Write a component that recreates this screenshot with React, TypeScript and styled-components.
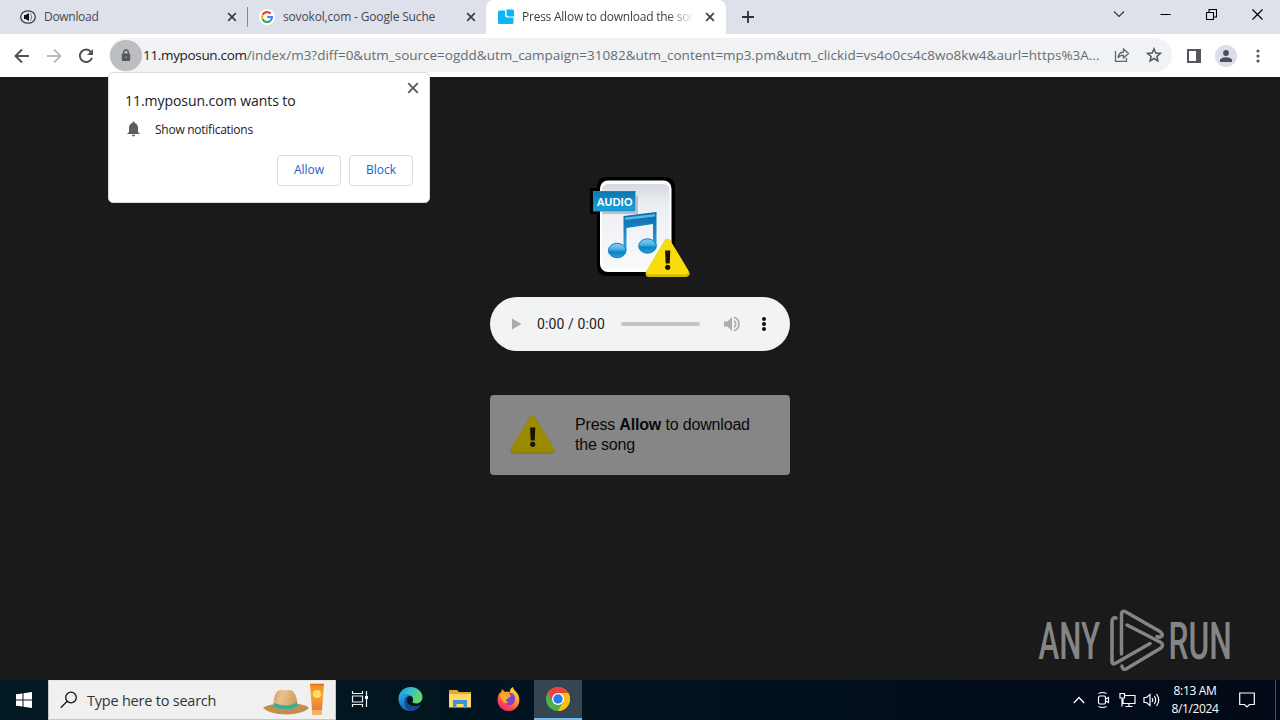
import React from 'react';
import styled, { createGlobalStyle } from 'styled-components';

const GlobalStyle = createGlobalStyle`
  * { box-sizing: border-box; }
  body { margin: 0; background: #1a1a1a; font-family: "Open Sans", "Noto Sans", sans-serif; overflow: hidden; }
  svg { display: block; flex: none; }
`;

const Screen = styled.div`
  width: 1280px;
  height: 720px;
  display: flex;
  flex-direction: column;
  position: relative;
`;

const Label = styled.span<{ $size: number; $spacing?: number; $color?: string; $weight?: number }>`
  font-size: ${p => p.$size}px;
  letter-spacing: ${p => p.$spacing ?? 0}px;
  color: ${p => p.$color ?? '#202124'};
  font-weight: ${p => p.$weight ?? 400};
  white-space: nowrap;
`;

/* Tab strip */
const TabStrip = styled.header`
  height: 34px;
  flex: none;
  background: #dee1e9;
  display: flex;
  padding-left: 8px;
`;
const Tab = styled.div<{ $active?: boolean; $divider?: boolean }>`
  width: ${p => (p.$active ? 240 : 239)}px;
  height: 34px;
  display: flex;
  align-items: center;
  gap: 8px;
  padding: 0 6px 0 12px;
  position: relative;
  background: ${p => (p.$active ? '#fff' : 'transparent')};
  border-radius: 8px 8px 0 0;
  &::after {
    content: '';
    display: ${p => (p.$divider ? 'block' : 'none')};
    position: absolute;
    right: -1px;
    top: 7px;
    width: 1px;
    height: 20px;
    background: #84878c;
  }
`;
const TabTitle = styled.div<{ $fade?: boolean }>`
  width: 172px;
  flex: none;
  overflow: hidden;
  display: flex;
  line-height: 18px;
  mask-image: ${p => (p.$fade ? 'linear-gradient(to right, #000 145px, transparent 172px)' : 'none')};
`;
const TabClose = styled.div`
  width: 16px;
  flex: none;
`;
const NewTab = styled.div`
  width: 28px;
  margin-left: 8px;
  display: grid;
  place-items: center;
`;
const WindowButtons = styled.div`
  margin-left: auto;
  width: 184px;
  height: 28px;
  display: grid;
  grid-template-columns: repeat(4, 46px);
  place-items: center;
`;

/* Toolbar */
const Toolbar = styled.div`
  height: 43px;
  flex: none;
  background: #fff;
  display: flex;
  align-items: center;
  padding: 0 6px;
`;
const ToolButton = styled.div`
  width: 32px;
  height: 32px;
  display: grid;
  place-items: center;
  flex: none;
`;
const AddressBar = styled.div`
  width: 1063px;
  height: 34px;
  margin: 0 6px 1px 7px;
  border-radius: 17px;
  background: #f0f2f4;
  display: flex;
  align-items: center;
  flex: none;
`;
const SiteInfo = styled.div`
  width: 32px;
  height: 31px;
  margin: 0 1px 0 1px;
  border-radius: 50%;
  background: #bbbdbe;
  display: grid;
  place-items: center;
  flex: none;
`;
const Address = styled.div`
  width: 963px;
  flex: none;
  display: flex;
  white-space: nowrap;
  line-height: 20px;
`;
const Avatar = styled.div`
  width: 22px;
  height: 22px;
  border-radius: 50%;
  background: #dcdfe7;
  display: grid;
  place-items: center;
`;

/* Page */
const Page = styled.main`
  height: 603px;
  flex: none;
  background: #1a1a1a;
  display: flex;
  flex-direction: column;
  align-items: center;
  padding-top: 99px;
`;
const Player = styled.div`
  width: 300px;
  height: 54px;
  margin-top: 19px;
  flex: none;
  border-radius: 27px;
  background: #f1f3f5;
  display: flex;
  align-items: center;
  padding-left: 17px;
`;
const PlayerTime = styled.div`
  width: 84px;
  margin-left: 10px;
  font: 14px/18px "Roboto", sans-serif;
  letter-spacing: 0.12px;
  color: #1c1c1e;
  white-space: nowrap;
`;
const Track = styled.div`
  width: 79px;
  height: 4px;
  border-radius: 2px;
  background: #c3c4c5;
  margin-right: 22px;
`;
const PlayerMenu = styled.div`
  margin-left: 12px;
`;
const Notice = styled.section`
  width: 300px;
  height: 80px;
  margin-top: 44px;
  flex: none;
  border-radius: 4px;
  background: #868686;
  display: flex;
  align-items: center;
  padding-left: 20px;
  gap: 20px;
`;
const NoticeText = styled.p`
  margin: 0;
  width: 190px;
  font: 16px/20px "Liberation Sans", Arial, sans-serif;
  letter-spacing: -0.17px;
  color: #0a0a0a;
`;
const Watermark = styled.div`
  position: absolute;
  left: 1034px;
  top: 606px;
`;

/* Permission bubble */
const Bubble = styled.aside`
  position: absolute;
  left: 108px;
  top: 72px;
  width: 322px;
  height: 131px;
  border-radius: 5px;
  background: #fff;
  border: 1px solid #d9dbdd;
  padding: 7px 16px 0;
  display: flex;
  flex-direction: column;
`;
const BubbleClose = styled.div`
  align-self: flex-end;
  height: 11px;
  margin-right: -8px;
`;
const BubbleTitle = styled.div`
  line-height: 20px;
  height: 20px;
  display: flex;
`;
const PermissionRow = styled.div`
  display: flex;
  align-items: center;
  height: 18px;
  margin-top: 9px;
  gap: 13px;
`;
const Actions = styled.div`
  display: flex;
  justify-content: flex-end;
  gap: 8px;
  margin-top: 17px;
`;
const ActionButton = styled.button`
  width: 64px;
  height: 31px;
  border: 1px solid #dadce0;
  border-radius: 4px;
  background: #fff;
  color: #1a62c4;
  font: 500 12px/16px "Open Sans", sans-serif;
  padding: 0 0 1px;
`;

/* Taskbar */
const Taskbar = styled.footer`
  height: 40px;
  flex: none;
  background: linear-gradient(to right, #011921, #02141f 45%, #020d1b 75%, #020a18);
  display: flex;
`;
const StartButton = styled.div`
  width: 48px;
  display: grid;
  place-items: center;
`;
const SearchBox = styled.div`
  width: 288px;
  height: 40px;
  background: #f0f0f0;
  border: 1px solid #c4c6c7;
  border-top-color: #e4e4e4;
  display: flex;
  align-items: center;
  padding: 0 8px 0 11px;
`;
const SearchText = styled.div`
  margin-left: 9px;
  width: 176px;
  flex: none;
`;
const TaskButton = styled.div<{ $active?: boolean; $wide?: number }>`
  width: ${p => p.$wide ?? 49}px;
  height: 40px;
  display: grid;
  place-items: center;
  background: ${p => (p.$active ? '#354651' : 'transparent')};
  border-bottom: 2px solid ${p => (p.$active ? '#76b9ed' : 'transparent')};
`;
const Tray = styled.div`
  margin-left: auto;
  display: flex;
  align-items: center;
`;
const TrayIcon = styled.div`
  width: 24px;
  display: grid;
  place-items: center;
`;
const Clock = styled.div`
  width: 64px;
  display: flex;
  flex-direction: column;
  align-items: center;
  line-height: 18px;
`;
const ActionCenter = styled.div`
  width: 40px;
  display: grid;
  place-items: center;
`;
const ShowDesktop = styled.div`
  width: 5px;
  height: 40px;
  margin-left: 8px;
  border-left: 1px solid #48505a;
`;

const Cross = ({ size = 16, color = '#3c4043', w = 1.7, r = 3.8 }: { size?: number; color?: string; w?: number; r?: number }) => (
  <svg width={size} height={size} viewBox="-8 -8 16 16" stroke={color} strokeWidth={w}>
    <path d={`M${-r} ${-r}L${r} ${r}M${r} ${-r}L${-r} ${r}`} />
  </svg>
);

const WarningTriangle = ({ dim }: { dim?: boolean }) => (
  <>
    <path d="M22.5 5L41 36H4Z" fill={dim ? '#8d7f08' : '#d8b900'} stroke={dim ? '#8d7f08' : '#d8b900'} strokeWidth="7" strokeLinejoin="round" />
    <path d="M22.5 4.500L40.500 34H4.500Z" fill={dim ? '#9b8b00' : '#f8dc0c'} stroke={dim ? '#9b8b00' : '#f8dc0c'} strokeWidth="6" strokeLinejoin="round" />
    <path d="M20.100 13H25.300L24.700 26H20.700Z" fill="#191200" />
    <circle cx="22.7" cy="29.8" r="2.6" fill="#191200" />
  </>
);

const AudioIcon = () => (
  <svg width="100" height="102" viewBox="590 176 100 102">
    <defs>
      <linearGradient id="sheet" x1="0" y1="0" x2="0" y2="1">
        <stop offset="0" stopColor="#d5dae1" />
        <stop offset="0.25" stopColor="#eceef2" />
        <stop offset="1" stopColor="#fafafc" />
      </linearGradient>
      <linearGradient id="note" x1="0" y1="0" x2="0" y2="1">
        <stop offset="0" stopColor="#0869aa" />
        <stop offset="1" stopColor="#2ca6df" />
      </linearGradient>
      <linearGradient id="tag" x1="0" y1="0" x2="0" y2="1">
        <stop offset="0" stopColor="#0d75b0" />
        <stop offset="1" stopColor="#17a4de" />
      </linearGradient>
      <linearGradient id="noteHead" x1="0" y1="0" x2="0" y2="1">
        <stop offset="0" stopColor="#8ad4f4" />
        <stop offset="0.4" stopColor="#4fb2e2" />
        <stop offset="0.6" stopColor="#0b84c6" />
        <stop offset="1" stopColor="#27a0de" />
      </linearGradient>
    </defs>
    <path d="M607 177H664Q675 177 675 188V266Q675 276 665 276H608Q597 276 597 266V214H590V188H597Q597 177 607 177Z" fill="#000" />
    <rect x="600" y="180.500" width="71.500" height="91.500" rx="8" fill="#fff" />
    <rect x="602" y="184" width="67.500" height="85" rx="6" fill="url(#sheet)" />
    <path d="M602 213H637V196" fill="none" stroke="#b8c0cc" strokeWidth="2" />
    <rect x="593.500" y="191.500" width="41.500" height="19.500" fill="url(#tag)" stroke="#1387c2" />
    <text x="597" y="205.500" fontFamily="Lato, sans-serif" fontWeight="900" fontSize="10.500" textLength="35.500" fill="#fff">AUDIO</text>
    <path d="M623.500 216L656.500 212V246H653V224L626.500 228V250H623.500Z" fill="url(#note)" />
    <path d="M625 217.500L655 214V216.500L625 220Z" fill="#55b9e8" />
    <ellipse cx="617.200" cy="250.500" rx="8.800" ry="7.200" fill="url(#noteHead)" stroke="#0b7fc0" strokeWidth="1" />
    <ellipse cx="647.500" cy="246" rx="8.800" ry="7.200" fill="url(#noteHead)" stroke="#0b7fc0" strokeWidth="1" />
    <g transform="translate(645 237.500)"><WarningTriangle /></g>
  </svg>
);

const AnyRunLogo = () => (
  <svg width="200" height="70" viewBox="1034 606 200 70">
    <g fill="#858585" fontFamily="Roboto, sans-serif" fontSize="52" fontWeight="500">
      <text transform="translate(1038.500 659) scale(0.600 1)">ANY</text>
      <text transform="translate(1168.500 659) scale(0.610 1)">RUN</text>
    </g>
    <g fill="none" stroke="#858585" strokeWidth="3.500" strokeLinecap="round" strokeLinejoin="round">
      <path d="M1116 618Q1112 617 1112 622V662Q1112 665 1116 663L1150 643.500" />
      <path d="M1121.500 654V614Q1121.500 610 1126 612L1160 631.500Q1163 634 1162 636Q1160 638 1157 636.500" />
      <path d="M1127 625L1161 642.500Q1164 645 1161 648L1126 669Q1122 670 1122 666" />
    </g>
  </svg>
);

const ChromeIcon = () => (
  <svg width="24" height="24" viewBox="0 0 24 24">
    <circle cx="12" cy="12" r="12" fill="#4caf50" />
    <path d="M1.600 6A12 12 0 0 1 22.400 6H12L6.800 15Z" fill="#e8453c" />
    <path d="M22.400 6A12 12 0 0 1 12 24L17.200 15L12 6Z" fill="#fbc116" />
    <circle cx="12" cy="12" r="6" fill="#fff" />
    <circle cx="12" cy="12" r="4.700" fill="#2c7be5" />
  </svg>
);

const EdgeIcon = () => (
  <svg width="25" height="24" viewBox="0 0 24 24">
    <defs>
      <linearGradient id="edgeTop" x1="0" y1="0" x2="1" y2="0.4">
        <stop offset="0" stopColor="#2390de" />
        <stop offset="0.5" stopColor="#35bfcf" />
        <stop offset="1" stopColor="#65d867" />
      </linearGradient>
      <linearGradient id="edgeBody" x1="0" y1="0" x2="0.7" y2="1">
        <stop offset="0" stopColor="#29a9e8" />
        <stop offset="1" stopColor="#0c55a6" />
      </linearGradient>
    </defs>
    <path d="M0 12C0 5 5 0 12 0C19 0 24 5 24 10C24 14 21 16.500 18 16.500C15 16.500 13.800 15.500 14 14.500C16 11 13 8.500 10 8C6 7 2 8.500 0 12Z" fill="url(#edgeTop)" />
    <path d="M0 12C1 7 8 5.500 12 8.500C9 9 7.500 12 8.500 15C10 19 16 21 22 18C17 25.500 7 25.500 3 20C1 17.500 0 15 0 12Z" fill="url(#edgeBody)" />
    <path d="M12 8.500C8 8 5.500 12 6 16C6.500 20 9 23 12 24C16 24 20 22 22 18C16 21 10 19 8.500 15C7.500 12 9 9 12 8.500Z" fill="#15498e" />
  </svg>
);

const FirefoxIcon = () => (
  <svg width="24" height="24" viewBox="0 0 24 24">
    <defs>
      <linearGradient id="fox" x1="0.8" y1="0" x2="0.2" y2="1">
        <stop offset="0" stopColor="#ffe04a" />
        <stop offset="0.45" stopColor="#ff9125" />
        <stop offset="0.75" stopColor="#ff4150" />
        <stop offset="1" stopColor="#e92286" />
      </linearGradient>
    </defs>
    <path d="M5 2L8 5C10 4.500 12 4.500 13 5C12.500 3 14 1 16 0C16 3 21 5 22 10C23.500 16 20 24 12 24C5 24 .5 19 .5 13C.5 9 2 7 3 5L4 6Z" fill="url(#fox)" />
    <path d="M7 9C10 9 11 10 13 10C15 8 12 6.500 11 6C16 5 18.500 9 18 13C17.500 17 14 19 11 18C8 17 6.500 14 7 12L11 12Z" fill="#7845cf" />
    <path d="M3 8C5 6.500 7 7 8 8.500L13 10L10 12C8 13 9 15 12 15C9 18 4 15 3 8Z" fill="#ffad26" />
  </svg>
);

const FolderIcon = () => (
  <svg width="22" height="20" viewBox="0 0 22 20">
    <path d="M0 1H8L10 3H22V18H0Z" fill="#e8a42b" />
    <path d="M0 5H22V18.500H0Z" fill="#ffd96c" />
    <path d="M4 11H18V19H14.500V15H7.500V19H4Z" fill="#3f96cf" />
  </svg>
);

const HatIcon = () => (
  <svg width="66" height="34" viewBox="0 0 66 34">
    <defs>
      <linearGradient id="straw" x1="0" y1="0" x2="1" y2="0.3">
        <stop offset="0" stopColor="#c9935a" />
        <stop offset="0.4" stopColor="#e9c48c" />
        <stop offset="1" stopColor="#cf9d62" />
      </linearGradient>
      <linearGradient id="tube" x1="0" y1="0" x2="0" y2="1">
        <stop offset="0" stopColor="#ee8a1f" />
        <stop offset="0.4" stopColor="#f9a52f" />
        <stop offset="1" stopColor="#e87a3c" />
      </linearGradient>
    </defs>
    <path d="M0 24.500Q9 20 24 20T46 24.500Q42 30.500 24 31.500Q5 31 0 24.500Z" fill="#c48d50" />
    <path d="M10 24C11 12 13 7 18 7C21 6 22 8 25 7C32 6 34 14 35 24Q24 29 10 24Z" fill="url(#straw)" />
    <path d="M11 20Q24 25 34 19.500L35 23.500Q24 29 10 24Z" fill="#35b095" />
    <path d="M47 1H61L59 27H49Z" fill="url(#tube)" />
    <circle cx="54" cy="11" r="4" fill="#ffdf6a" />
    <rect x="49" y="27" width="10" height="5" rx="1" fill="#f4b35c" />
    <path d="M47 1.500H61" stroke="#d9731a" strokeWidth="1.500" />
  </svg>
);

export default function App() {
  return (
    <Screen>
      <GlobalStyle />
      <TabStrip>
        <Tab $divider>
          <svg width="16" height="16" viewBox="0 0 16 16">
            <ellipse cx="8" cy="8" rx="7.300" ry="6.200" fill="#e7e9ee" stroke="#3b3d42" strokeWidth="1.300" />
            <path d="M4 6H5.500L9 4V12L5.500 10H4Z" fill="#111" />
            <path d="M10.500 4.500Q13 8 10.500 11.500" stroke="#777" fill="none" />
          </svg>
          <TabTitle><Label $size={12} $color="#45494e" $spacing={-0.3}>Download</Label></TabTitle>
          <TabClose><Cross /></TabClose>
        </Tab>
        <Tab>
          <svg width="16" height="16" viewBox="0 0 16 16">
            <circle cx="8" cy="8" r="8" fill="#fff" />
            <g fill="none" strokeWidth="2.200">
              <path d="M11.700 4.600A5 5 0 0 0 3.600 5.800" stroke="#ea4335" />
              <path d="M3.600 5.800A5 5 0 0 0 3.600 10.200" stroke="#fbbc05" />
              <path d="M3.600 10.200A5 5 0 0 0 11.400 11.700" stroke="#34a853" />
              <path d="M11.400 11.700A5 5 0 0 0 13 8H8.200" stroke="#4285f4" />
            </g>
          </svg>
          <TabTitle><Label $size={12} $color="#45494e" $spacing={-0.16}>sovokol,com - Google Suche</Label></TabTitle>
          <TabClose><Cross /></TabClose>
        </Tab>
        <Tab $active>
          <svg width="16" height="16" viewBox="0 0 16 16" fill="#0cb5f3">
            <path d="M1.500 1.500H7V6Q7 8.500 9.500 8.500H15.500V13.500Q15.500 15 14 15H1.500Q0 15 0 13.500V3Q0 1.500 1.500 1.500Z" />
            <path d="M8.500 .5H14.500Q16 .5 16 2V7.500H10.500Q8.500 7.500 8.500 5.500Z" />
          </svg>
          <TabTitle $fade><Label $size={12} $color="#3c4043" $spacing={-0.24}>Press Allow to download the song</Label></TabTitle>
          <TabClose><Cross /></TabClose>
        </Tab>
        <NewTab>
          <svg width="14" height="14" viewBox="0 0 14 14" stroke="#2e3135" strokeWidth="1.800"><path d="M7 1V13M1 7H13" /></svg>
        </NewTab>
        <WindowButtons>
          <svg width="12" height="8" viewBox="0 0 12 8" fill="none" stroke="#333" strokeWidth="1.100"><path d="M1 1.500L6 6.500L11 1.500" /></svg>
          <svg width="11" height="11" viewBox="0 0 11 11" stroke="#000"><path d="M.5 5.500H10.500" /></svg>
          <svg width="11" height="11" viewBox="0 0 11 11" fill="none" stroke="#000" strokeWidth="1.100"><path d="M.5 3.500H7.500V10.500H.5ZM3 3.500V.5H10.500V8H7.500" /></svg>
          <svg width="11" height="11" viewBox="0 0 11 11" stroke="#000" strokeWidth="1.200"><path d="M.5 .5L10.500 10.500M10.500 .5L.5 10.500" /></svg>
        </WindowButtons>
      </TabStrip>

      <Toolbar>
        <ToolButton><svg width="16" height="16" viewBox="0 0 16 16" fill="none" stroke="#4f5357" strokeWidth="2"><path d="M15 8H2M8 1.500L1.500 8L8 14.500" /></svg></ToolButton>
        <ToolButton><svg width="16" height="16" viewBox="0 0 16 16" fill="none" stroke="#b9bbbe" strokeWidth="1.800"><path d="M1 8H14M8 1.500L14.500 8L8 14.500" /></svg></ToolButton>
        <ToolButton>
          <svg width="16" height="16" viewBox="0 0 16 16"><path d="M13 4A6.200 6.200 0 1 0 14 9.700" fill="none" stroke="#4f5357" strokeWidth="2" /><path d="M15 1V7H9Z" fill="#4f5357" /></svg>
        </ToolButton>
        <AddressBar>
          <SiteInfo>
            <svg width="10" height="13" viewBox="0 0 10 13"><rect x="0.800" y="4.500" width="8.400" height="7.500" rx="1" fill="#54585b" /><path d="M2.700 5V3.300A2.300 2.300 0 0 1 7.300 3.300V5" fill="none" stroke="#54585b" strokeWidth="1.300" /><circle cx="5" cy="8.200" r=".9" fill="#999" /></svg>
          </SiteInfo>
          <Address>
            <Label $size={13.5} $spacing={-0.33}>11.myposun.com</Label>
            <Label $size={13.5} $spacing={0} $color="#696d72">/index/m3?diff=0&amp;utm_source=ogdd&amp;utm_campaign=31082&amp;utm_content=mp3.pm&amp;utm_clickid=vs4o0cs4c8wo8kw4&amp;aurl=https%3A...</Label>
          </Address>
          <ToolButton>
            <svg width="16" height="16" viewBox="0 0 16 16" fill="none" stroke="#62666b" strokeWidth="1.300"><path d="M1.500 4V14.300H12.500V11M9.500 5V2L14.500 6.500L9.500 11V8.300Q6 8 4 11Q4.500 5.500 9.500 5Z" /></svg>
          </ToolButton>
          <ToolButton>
            <svg width="16" height="16" viewBox="0 0 16 16" fill="none" stroke="#54585d" strokeWidth="1.500"><path d="M8 1.800L9.800 6L14.300 6.400L10.900 9.400L11.900 13.900L8 11.500L4.100 13.900L5.100 9.400L1.700 6.400L6.200 6Z" /></svg>
          </ToolButton>
        </AddressBar>
        <ToolButton><svg width="14" height="14" viewBox="0 0 14 14"><path d="M0 0H14V14H0ZM2 2V12H9V2Z" fill="#54585d" fillRule="evenodd" /></svg></ToolButton>
        <ToolButton><Avatar><svg width="12" height="12" viewBox="0 0 12 12" fill="#4a4f62"><circle cx="6" cy="3" r="2.900" /><path d="M0 12V9.500Q2 7.200 6 7.200T12 9.500V12Z" /></svg></Avatar></ToolButton>
        <ToolButton><svg width="4" height="14" viewBox="0 0 4 14" fill="#54585d"><circle cx="2" cy="2" r="1.600" /><circle cx="2" cy="7" r="1.600" /><circle cx="2" cy="12" r="1.600" /></svg></ToolButton>
      </Toolbar>

      <Page>
        <AudioIcon />
        <Player>
          <svg width="20" height="20" viewBox="0 0 20 20"><path d="M5 4.500V15.500L14.500 10Z" fill="#a9abac" /></svg>
          <PlayerTime>0:00 / 0:00</PlayerTime>
          <Track />
          <svg width="20" height="20" viewBox="0 0 20 20"><path d="M2 7.500H5.500L10 3V17L5.500 12.500H2Z" fill="#a9abac" /><path d="M12 6.500Q15.500 10 12 13.500M12 3.300Q17 5 17 10T12 16.700" fill="none" stroke="#a9abac" strokeWidth="1.600" /></svg>
          <PlayerMenu><svg width="20" height="20" viewBox="0 0 20 20" fill="#0d0d0d"><circle cx="10" cy="5" r="2" /><circle cx="10" cy="10" r="2" /><circle cx="10" cy="15" r="2" /></svg></PlayerMenu>
        </Player>
        <Notice>
          <svg width="45" height="40" viewBox="0 0.500 45 40"><WarningTriangle dim /></svg>
          <NoticeText>Press <b>Allow</b> to download the song</NoticeText>
        </Notice>
      </Page>

      <Taskbar>
        <StartButton><svg width="16" height="16" viewBox="0 0 16 16" fill="#fff"><path d="M0 2.300L6.500 1.400V7.500H0ZM7.500 1.200L16 0V7.500H7.500ZM0 8.500H6.500V14.600L0 13.700ZM7.500 8.500H16V16L7.500 14.800Z" /></svg></StartButton>
        <SearchBox>
          <svg width="18" height="18" viewBox="0 0 18 18" fill="none" stroke="#161616" strokeWidth="1.300"><circle cx="11" cy="6.500" r="5.300" /><path d="M7.200 10.300L.7 16.800" /></svg>
          <SearchText><Label $size={14.5} $spacing={-0.22} $color="#333">Type here to search</Label></SearchText>
          <HatIcon />
        </SearchBox>
        <TaskButton $wide={48}>
          <svg width="18" height="18" viewBox="0 0 18 18" fill="none" stroke="#edf0f2" strokeWidth="1.200"><path d="M1.500 1V3.500H11.500V1M1.500 17V14.500H11.500V17M1.500 6H11.500V12H1.500ZM15.500 1V17" /><path d="M14 6H17V9H14Z" fill="#fff" stroke="none" /></svg>
        </TaskButton>
        <TaskButton $wide={53}><EdgeIcon /></TaskButton>
        <TaskButton $wide={46}><FolderIcon /></TaskButton>
        <TaskButton $wide={51}><FirefoxIcon /></TaskButton>
        <TaskButton $active $wide={48}><ChromeIcon /></TaskButton>
        <Tray>
          <TrayIcon><svg width="12" height="8" viewBox="0 0 12 8" fill="none" stroke="#fff" strokeWidth="1.300"><path d="M.8 7L6 1.500L11.200 7" /></svg></TrayIcon>
          <TrayIcon><svg width="14" height="18" viewBox="0 0 14 18" fill="none" stroke="#fff" strokeWidth="1.200"><rect x="2.500" y="5" width="7" height="8" rx="1.500" /><path d="M9.500 8L12.500 6.500V11.500L9.500 10M2.500 2.500Q6.500 .5 10.500 2.500M2.500 15.500Q6.500 17.500 10.500 15.500" /></svg></TrayIcon>
          <TrayIcon><svg width="17" height="16" viewBox="0 0 17 16" fill="none" stroke="#fff" strokeWidth="1.200"><path d="M6 3.500H16V11.500H4V7M10 11.500V14.500M6.500 14.500H13.500M1 1.500H5.500V6H1ZM3 6V14.500" /></svg></TrayIcon>
          <TrayIcon><svg width="17" height="16" viewBox="0 0 17 16" fill="none" stroke="#fff" strokeWidth="1.200"><path d="M1 5.500H3.500L7 2.500V13.500L3.500 10.500H1ZM9 6Q10.500 8 9 10M11.300 4Q14 8 11.300 12M13.500 2Q18 8 13.500 14" /></svg></TrayIcon>
          <Clock>
            <Label $size={12} $color="#fff" $spacing={-0.35}>8:13 AM</Label>
            <Label $size={12} $color="#fff" $spacing={-0.35}>8/1/2024</Label>
          </Clock>
          <ActionCenter><svg width="16" height="16" viewBox="0 0 16 16" fill="none" stroke="#fff" strokeWidth="1.200"><path d="M.7 1H15.300V12.500H10.500L8 15L5.500 12.500H.7Z" /></svg></ActionCenter>
          <ShowDesktop />
        </Tray>
      </Taskbar>

      <Watermark><AnyRunLogo /></Watermark>

      <Bubble>
        <BubbleClose><Cross color="#55595e" r={4.8} w={1.8} /></BubbleClose>
        <BubbleTitle><Label $size={14} $spacing={-0.05}>11.myposun.com wants to</Label></BubbleTitle>
        <PermissionRow>
          <svg width="17" height="16" viewBox="0 0 17 16" fill="#5a5e62"><path d="M8.500 .5Q9.700 .5 9.700 2Q13 3 13 7V11L15 13H2L4 11V7Q4 3 7.300 2Q7.300 .5 8.500 .5ZM6.800 13.800H10.200Q10 15.500 8.500 15.500T6.800 13.800Z" /></svg>
          <Label $size={12} $spacing={-0.26}>Show notifications</Label>
        </PermissionRow>
        <Actions>
          <ActionButton>Allow</ActionButton>
          <ActionButton>Block</ActionButton>
        </Actions>
      </Bubble>
    </Screen>
  );
}
